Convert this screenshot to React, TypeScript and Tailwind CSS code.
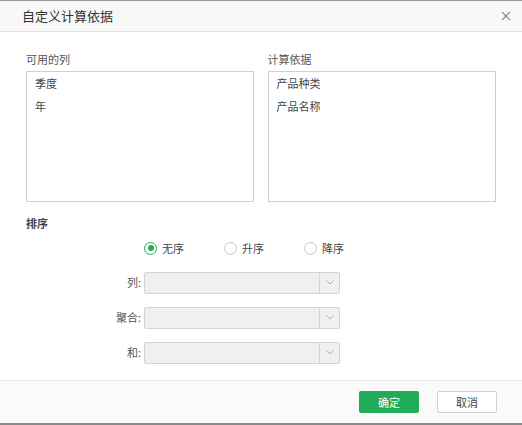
import React from "react";

const font = { fontFamily: '"Noto Sans CJK SC", "Noto Sans", sans-serif' };

function Radio({ checked, label }: { checked?: boolean; label: string }) {
  return (
    <div className="flex items-center gap-[5px]">
      <span
        className={
          "flex h-[13px] w-[13px] items-center justify-center rounded-full border " +
          (checked ? "border-[#2aab5a]" : "border-[#c8c8c8]")
        }
      >
        {checked && <span className="h-[6px] w-[6px] rounded-full bg-[#2aab5a]" />}
      </span>
      <span className="text-[11px] text-[#444]">{label}</span>
    </div>
  );
}

function SelectRow({ label }: { label: string }) {
  return (
    <div className="flex items-center">
      <div className="w-[144px] pr-[3px] text-right text-[11px] text-[#555]">{label}</div>
      <div className="flex h-[22px] w-[196px] items-stretch rounded-[2px] border border-[#d4d4d4] bg-[#f0f0f0]">
        <div className="flex-1" />
        <div className="flex w-[20px] items-center justify-center border-l border-[#d4d4d4]">
          <svg width="8" height="5" viewBox="0 0 8 5">
            <path d="M0.5 0.5 L4 4 L7.5 0.5" fill="none" stroke="#b0b0b0" strokeWidth="1" />
          </svg>
        </div>
      </div>
    </div>
  );
}

export default function App() {
  return (
    <div style={font} className="flex h-[425px] w-[522px] flex-col overflow-hidden bg-white">
      <div className="flex h-[32px] shrink-0 items-center justify-between border-t border-t-[#9a9a9a] border-b border-b-[#e3e3e3] bg-[#f8f8f8] pl-[22px] pr-[11px]">
        <span className="text-[13px] text-[#333]">自定义计算依据</span>
        <svg width="10" height="10" viewBox="0 0 10 10">
          <path d="M1 1 L9 9 M9 1 L1 9" stroke="#888" strokeWidth="1.1" />
        </svg>
      </div>
      <div className="flex-1 px-[26px] pt-[20px]">
        <div className="flex gap-[14px]">
          <div className="w-[228px]">
            <div className="mb-[4px] text-[11px] leading-[15px] text-[#555]">可用的列</div>
            <div className="h-[131px] border border-[#d0d0d0] px-[8px] pt-0 text-[11px] text-[#444]">
              <div className="h-[23px] leading-[23px]">季度</div>
              <div className="h-[23px] leading-[23px]">年</div>
            </div>
          </div>
          <div className="w-[229px]">
            <div className="mb-[4px] text-[11px] leading-[15px] text-[#555]">计算依据</div>
            <div className="h-[131px] border border-[#d0d0d0] px-[8px] pt-0 text-[11px] text-[#444]">
              <div className="h-[23px] leading-[23px]">产品种类</div>
              <div className="h-[23px] leading-[23px]">产品名称</div>
            </div>
          </div>
        </div>
        <div className="mt-[13px] text-[11px] font-bold leading-[16px] text-[#444]">排序</div>
        <div className="mt-[9px] flex gap-[40px] pl-[118px]">
          <Radio checked label="无序" />
          <Radio label="升序" />
          <Radio label="降序" />
        </div>
        <div className="-ml-[26px] mt-[15px] flex flex-col gap-[13px]">
          <SelectRow label="列:" />
          <SelectRow label="聚合:" />
          <SelectRow label="和:" />
        </div>
      </div>
      <div className="flex h-[45px] shrink-0 items-center justify-end gap-[18px] border-t border-t-[#e6e6e6] border-b-2 border-b-[#8a8a8a] bg-[#fafafa] pr-[25px]">
        <button className="h-[22px] w-[60px] rounded-[2px] bg-[#21ac58] text-[11px] text-white">确定</button>
        <button className="h-[22px] w-[60px] rounded-[2px] border border-[#cfcfcf] bg-white text-[11px] text-[#444]">取消</button>
      </div>
    </div>
  );
}
